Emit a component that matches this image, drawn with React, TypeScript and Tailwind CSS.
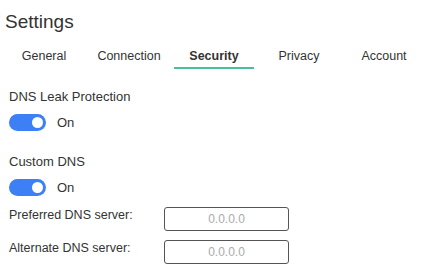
import React from "react";

const tabs = ["General", "Connection", "Security", "Privacy", "Account"];

function Toggle() {
  return (
    <div className="flex items-center">
      <div className="relative h-[17px] w-[37px] rounded-full bg-[#3d7ff5]">
        <div className="absolute right-[3px] top-[3px] h-[11px] w-[11px] rounded-full bg-white" />
      </div>
      <span className="ml-[11px] text-[13px] leading-[16px]">On</span>
    </div>
  );
}

function Field({ label }: { label: string }) {
  return (
    <div className="flex items-start">
      <div className="w-[155px] text-[12.5px] leading-[16px]">{label}</div>
      <div className="flex h-[24px] w-[125px] items-center justify-center rounded-[3px] border border-[#555] text-[12px] text-[#aaa]">
        0.0.0.0
      </div>
    </div>
  );
}

export default function App() {
  return (
    <div
      className="h-[278px] w-[440px] overflow-hidden bg-white text-[#333]"
      style={{ fontFamily: '"Liberation Sans", Arial, sans-serif' }}
    >
      <h1 className="pl-[5px] pt-[11px] text-[19px] font-normal leading-[22px]">Settings</h1>
      <div className="mt-[11px] flex gap-[5px] pl-[4px]">
        {tabs.map((t) => (
          <div
            key={t}
            className={
              t === "Security"
                ? "w-[80px] border-b-2 border-[#48bf9c] pb-[3px] pt-[4px] text-center text-[12.5px] font-bold leading-[16px]"
                : "w-[80px] border-b-2 border-transparent pb-[3px] pt-[4px] text-center text-[12.5px] leading-[16px]"
            }
          >
            {t}
          </div>
        ))}
      </div>
      <div className="px-[9px]">
        <div className="mt-[20px] text-[13px] leading-[16px]">DNS Leak Protection</div>
        <div className="mt-[9px]">
          <Toggle />
        </div>
        <div className="mt-[23px] text-[13px] leading-[16px]">Custom DNS</div>
        <div className="mt-[9px]">
          <Toggle />
        </div>
        <div className="mt-[11px]">
          <Field label="Preferred DNS server:" />
        </div>
        <div className="mt-[9px]">
          <Field label="Alternate DNS server:" />
        </div>
      </div>
    </div>
  );
}
